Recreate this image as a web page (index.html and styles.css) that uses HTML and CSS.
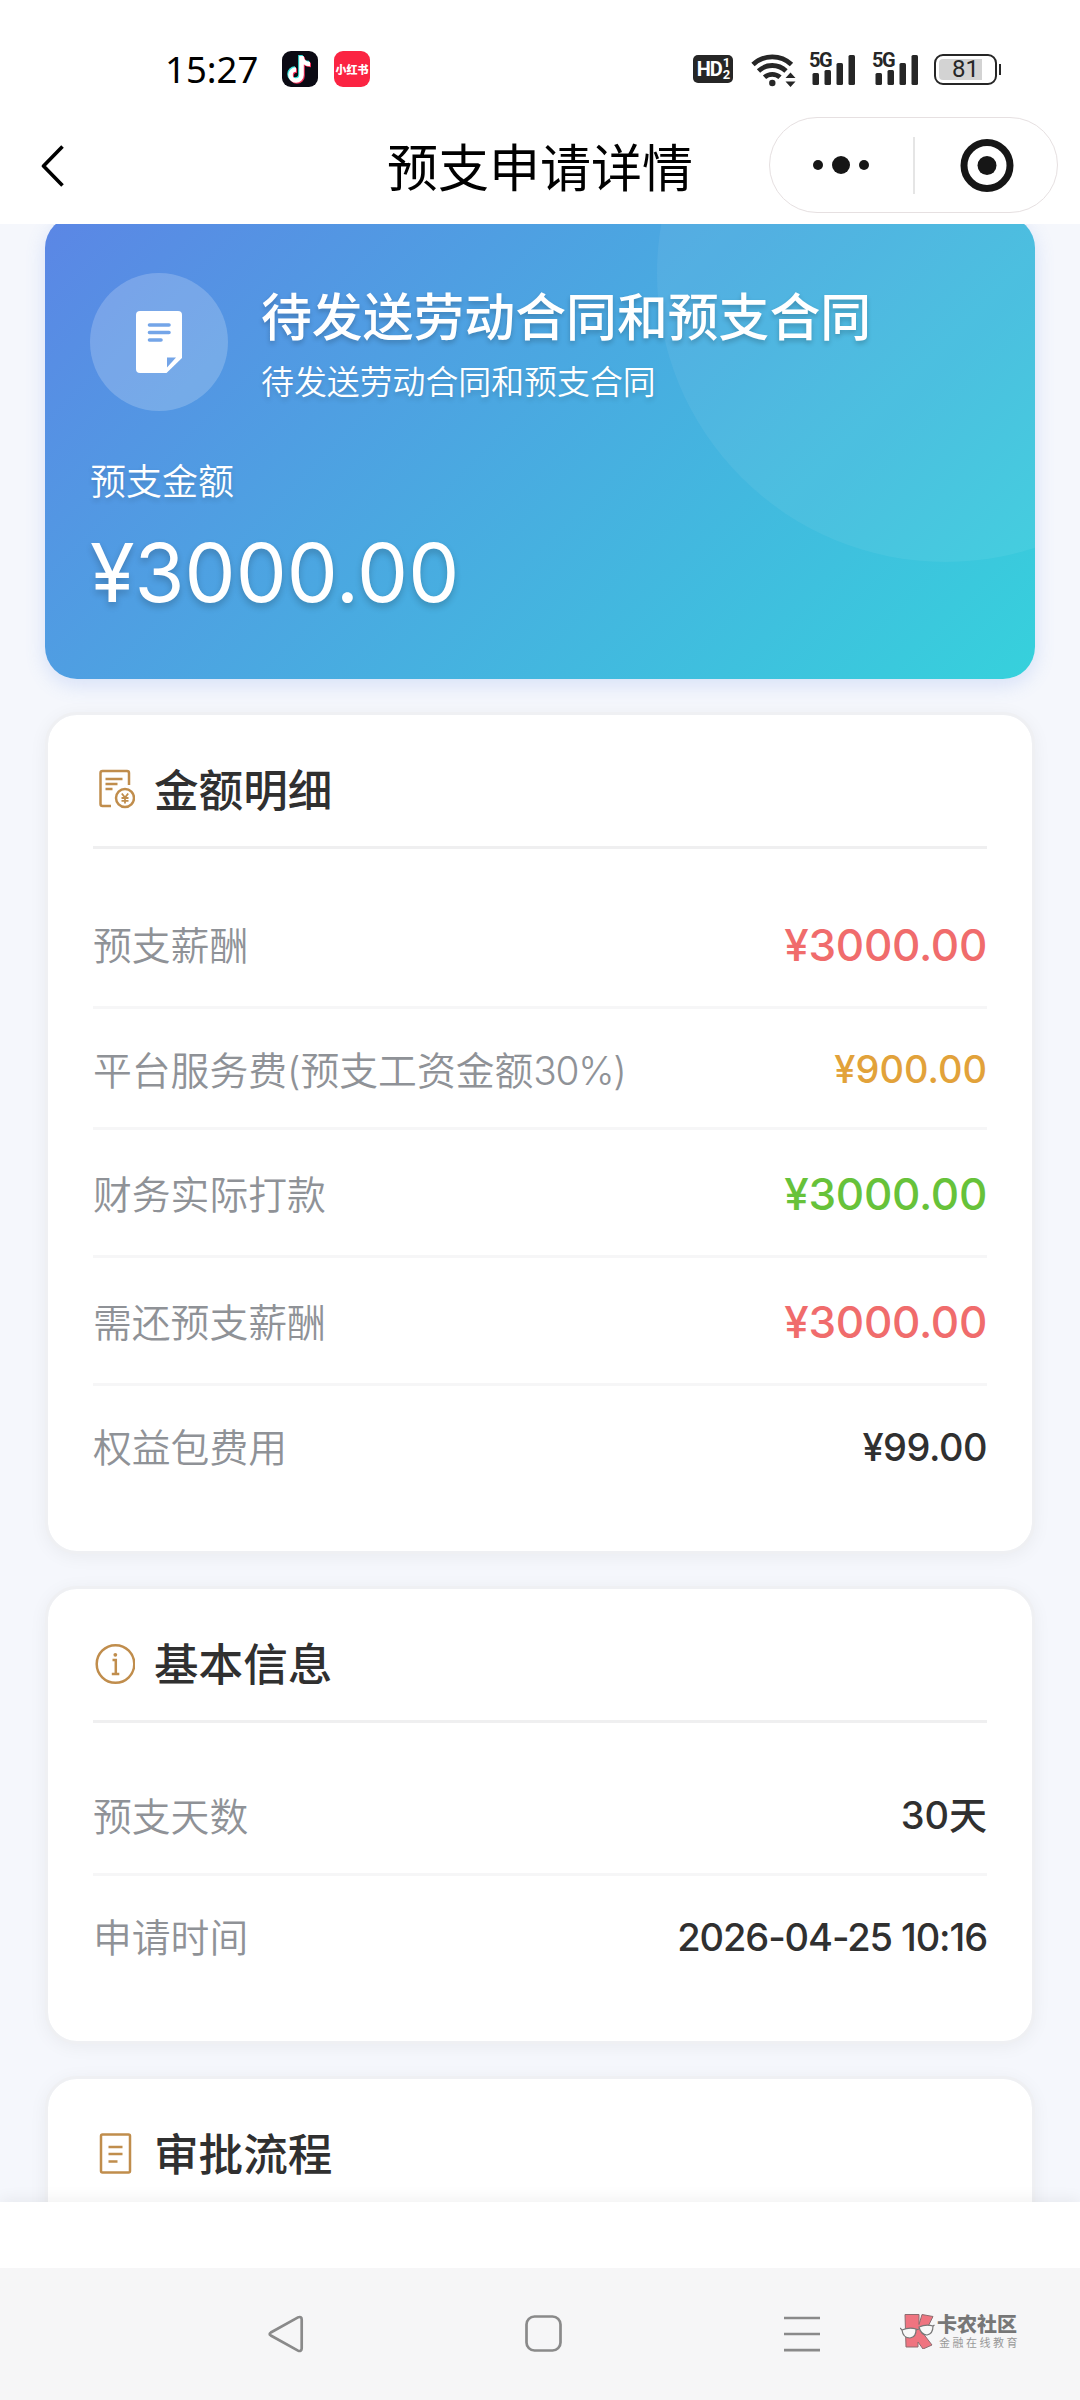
FILE: index.html
```html
<!DOCTYPE html>
<html lang="zh-CN">
<head>
<meta charset="utf-8">
<title>预支申请详情</title>
<link rel="stylesheet" href="styles.css">
</head>
<body>
<div class="phone">
  <header class="top">
    <div class="status">
      <span class="clock">15:27</span>
      <svg class="app" width="36" height="36" viewBox="0 0 36 36"><rect width="36" height="36" rx="9" fill="#0b0a14"/>
        <g fill="none" stroke-width="4.6"><path d="M18.500 4v19a5.500 5.500 0 1 1-5.500-5.500M18.500 5c.5 4 4 7 8.500 7" stroke="#35e6e0"/><path d="M20.500 6v19a5.500 5.500 0 1 1-5.500-5.500M20.500 7c.5 4 4 7 8.500 7" stroke="#f5305a"/><path d="M19.500 5v19a5.500 5.500 0 1 1-5.500-5.500M19.500 6c.5 4 4 7 8.500 7" stroke="#fff"/></g></svg>
      <span class="app red">小红书</span>
      <span class="hd">HD<span class="hd-n"><i>1</i><i>2</i></span></span>
      <svg class="wifi" width="46" height="36" viewBox="0 0 46 36" fill="none" stroke="#262626" stroke-width="4.800"><path d="M2 13.500a28 28 0 0 1 38.500 0M7.500 20a20 20 0 0 1 27.500 0M13.500 26.300a11.500 11.500 0 0 1 15.500 0"/><circle cx="21.300" cy="32" r="3.200" fill="#262626" stroke="none"/><path d="M34.500 27l5-5.500 5 5.500zM34.500 30.500l5 5.500 5-5.500z" fill="#262626" stroke="none"/></svg>
      <span class="sig"><b>5G</b><svg width="46" height="32" viewBox="0 0 46 32" fill="#262626"><rect x="3.500" y="20" width="6.500" height="12" rx="1.500"/><rect x="15.500" y="17" width="6.500" height="15" rx="1.500"/><rect x="27.500" y="10" width="6.500" height="22" rx="1.500"/><rect x="39.500" y="2" width="6.500" height="30" rx="1.500"/></svg></span>
      <span class="sig"><b>5G</b><svg width="46" height="32" viewBox="0 0 46 32" fill="#262626"><rect x="3.500" y="20" width="6.500" height="12" rx="1.500"/><rect x="15.500" y="17" width="6.500" height="15" rx="1.500"/><rect x="27.500" y="10" width="6.500" height="22" rx="1.500"/><rect x="39.500" y="2" width="6.500" height="30" rx="1.500"/></svg></span>
      <span class="battery">81</span><span class="nub"></span>
    </div>
    <div class="nav">
      <svg class="back" width="24" height="42" viewBox="0 0 24 42" fill="none" stroke="#000" stroke-width="3.600"><path d="M21.500 1.500L2.500 21l19 19.500" stroke-linejoin="round"/></svg>
      <h1 class="page-title">预支申请详情</h1>
      <div class="capsule">
        <svg width="286" height="94" viewBox="0 0 286 94"><g fill="#161616"><circle cx="48" cy="47" r="5"/><circle cx="71" cy="47" r="9"/><circle cx="94" cy="47" r="5"/><circle cx="217" cy="47.500" r="9.500"/></g><path d="M144 19v57" stroke="#dcdcdc" stroke-width="1.500"/><circle cx="217" cy="47.500" r="23" fill="none" stroke="#161616" stroke-width="7"/></svg>
      </div>
    </div>
  </header>

  <main class="content">
    <section class="hero">
      <div class="hero-head">
        <div class="hero-icon"><svg width="46" height="62" viewBox="0 0 46 62"><path d="M4 0h38a4 4 0 0 1 4 4v43L30.500 62H4a4 4 0 0 1-4-4V4a4 4 0 0 1 4-4z" fill="#fff"/><path d="M13.500 14h19.500M13.500 21.500h19.500M13.500 29h11.500" stroke="#74a5e8" stroke-width="3.600" stroke-linecap="round"/><path d="M31 46.500h9L31 56.500z" fill="#74a5e8"/></svg></div>
        <div>
          <h2 class="hero-title">待发送劳动合同和预支合同</h2>
          <p class="hero-sub">待发送劳动合同和预支合同</p>
        </div>
      </div>
      <p class="hero-label">预支金额</p>
      <p class="hero-amount">¥3000.00</p>
    </section>

    <section class="card">
      <h3 class="card-head"><svg class="ico" width="42" height="42" viewBox="0 0 42 42" fill="none" stroke="#c08d4c" stroke-width="2.500"><path d="M18 37H9.500a2 2 0 0 1-2-2V4a2 2 0 0 1 2-2H34a2 2 0 0 1 2 2v12M12.500 10h17M12.500 15h12M12.500 20h7"/><circle cx="32" cy="29" r="9"/><path d="M28.800 24.500l3.200 4 3.200-4M32 28.500v6M28.500 29h7M28.500 31.800h7" stroke-width="1.800"/></svg><span class="head-text">金额明细</span></h3>
      <div class="rows">
        <div class="row big"><span class="key">预支薪酬</span><span class="val red-t">¥3000.00</span></div>
        <div class="row"><span class="key">平台服务费(预支工资金额<span class="pct">30%)</span></span><span class="val gold-t">¥900.00</span></div>
        <div class="row big"><span class="key">财务实际打款</span><span class="val green-t">¥3000.00</span></div>
        <div class="row big"><span class="key">需还预支薪酬</span><span class="val red-t">¥3000.00</span></div>
        <div class="row"><span class="key">权益包费用</span><span class="val small">¥99.00</span></div>
      </div>
    </section>

    <section class="card">
      <h3 class="card-head"><svg class="ico" width="42" height="42" viewBox="0 0 42 42" fill="none" stroke="#c08d4c" stroke-width="2.500"><circle cx="22.500" cy="21" r="18.800"/><path d="M19.500 17h3.300v13.500M18.800 31h7.500"/><circle cx="22.300" cy="11.800" r="1.900" fill="#c08d4c" stroke="none"/></svg><span class="head-text">基本信息</span></h3>
      <div class="rows">
        <div class="row"><span class="key">预支天数</span><span class="val days">30天</span></div>
        <div class="row"><span class="key">申请时间</span><span class="val date">2026-04-25 10:16</span></div>
      </div>
    </section>

    <section class="card last">
      <h3 class="card-head"><svg class="ico" width="42" height="42" viewBox="0 0 42 42" fill="none" stroke="#c08d4c" stroke-width="2.500"><rect x="8" y="1.500" width="29" height="38" rx="1.500"/><path d="M15.500 14h14M15.500 21h14M15.500 28.500h9"/></svg><span class="head-text">审批流程</span></h3>
    </section>
  </main>

  <div class="action-bar"></div>
  <footer class="sysnav">
    <svg class="keys" width="552" height="38" viewBox="0 0 552 38" fill="none" stroke="#8a8a8a" stroke-width="2.700"><path d="M2.800 17.500L30 2.400c2-1 3.700 0 3.700 2v29.200c0 2-1.700 3-3.700 2L2.800 20.500c-1.500-1-1.500-2 0-3z"/><rect x="258.500" y="1.500" width="34" height="34" rx="8"/><path d="M516 3h36M516 19h36M516 35.200h36"/></svg>
    <div class="mark">
      <svg width="35" height="36" viewBox="0 0 35 36"><g fill="#ef7480" stroke="#8d6d70" stroke-width="1"><path d="M5 1.500h14v10L22 1.500l11 2-5 10-6 5.500 10 13-9 4-5-7v5H6z"/></g><g fill="#f8f8f8" stroke="#777" stroke-width="1.200"><path d="M2 17q7-3 14-1 .5 8-6 9-7 0-8-8zM19 14q7-3 14-1 0 8-6 9-6 0-8-8z"/><path d="M16 17l3-1M0 15l2 2M33 13l1.500-1"/></g></svg>
      <div><p class="mark-name">卡农社区</p><p class="mark-sub">金融在线教育</p></div>
    </div>
  </footer>
</div>
</body>
</html>
```
FILE: styles.css
```css
* { box-sizing: border-box; margin: 0; padding: 0; }
body { width: 1080px; height: 2400px; overflow: hidden; background: #f5f7fc; color: #303133; font-family: "Inter", "Noto Sans CJK SC", sans-serif; }
svg { display: block; flex: none; }
.phone { width: 1080px; height: 2400px; display: flex; flex-direction: column; }

/* status bar and title bar */
.top { height: 224px; background: #fff; position: relative; z-index: 2; flex: none; }
.status { height: 106px; padding: 32px 79px 0 165px; display: flex; align-items: center; }
.clock { width: 117px; font: 400 36.500px/40px "Noto Sans", sans-serif; color: #000; white-space: nowrap; }
.app { width: 36px; height: 36px; margin-right: 16px; flex: none; }
.red { border-radius: 9px; background: #fb2442; color: #fff; font: 900 11px/36px "Noto Sans CJK SC", sans-serif; text-align: center; white-space: nowrap; }
.hd { margin-left: 307px; width: 40px; height: 28px; border-radius: 5px; background: #262626; color: #fff; font: 700 20px/29px "Roboto", sans-serif; display: flex; justify-content: center; flex: none; letter-spacing: -1px; }
.hd-n { display: flex; flex-direction: column; font-size: 13px; line-height: 12px; padding: 2px 0 0 1px; }
.hd-n i { font-style: normal; }
.wifi { margin-left: 18px; }
.sig { margin-left: 12px; width: 46px; height: 32px; position: relative; flex: none; }
.sig + .sig { margin-left: 17px; }
.sig b { position: absolute; left: 0; top: -2px; font: 700 20px/18px "Roboto", sans-serif; color: #262626; letter-spacing: -1.500px; }
.battery { margin-left: 16px; width: 63px; height: 31px; border: 2.500px solid #262626; border-radius: 9px; background: linear-gradient(90deg, #d3d3d3 43px, #fff 43px) content-box; padding: 3px; font: 400 24px/20px "Roboto", sans-serif; color: #262626; text-align: center; flex: none; }
.nub { width: 2.500px; height: 11px; margin-left: 1.500px; background: #262626; flex: none; }

.nav { height: 118px; display: flex; padding-top: 11px; }
.back { margin: 28px 0 0 41px; }
.page-title { margin-left: 322px; width: 382px; font-size: 51px; font-weight: 400; line-height: 103px; color: #000; }
.capsule { width: 289px; height: 96px; border: 1.500px solid #e6e0e1; border-radius: 48px; flex: none; }

/* summary card */
.content { height: 1978px; flex: none; padding: 0 45px; overflow: hidden; }
.content::before { content: ""; display: table; }
.hero { height: 463px; margin-top: -8px; border-radius: 32px; padding: 57px 45px 0; position: relative; overflow: hidden; background: linear-gradient(135deg, #5b86e5 0%, #36d1dc 100%); box-shadow: 0 6px 20px rgba(91, 134, 229, .2); color: #fff; }
.hero::before { content: ""; position: absolute; left: 612px; top: -231px; width: 577px; height: 577px; border-radius: 50%; background: rgba(255, 255, 255, .06); }
.hero-head { display: flex; gap: 33px; height: 138px; position: relative; }
.hero-icon { width: 138px; height: 138px; border-radius: 50%; background: rgba(255, 255, 255, .2); display: flex; align-items: center; justify-content: center; }
.hero-title { font-size: 50.850px; line-height: 62px; margin-top: 14px; font-weight: 500; white-space: nowrap; text-shadow: 0 3px 5px rgba(0, 0, 0, .2); }
.hero-sub { font-size: 32.900px; line-height: 48px; margin-top: 9px; font-weight: 350; text-shadow: 0 3px 5px rgba(0, 0, 0, .15); }
.hero-label { font-size: 36px; line-height: 50px; margin-top: 46px; font-weight: 350; text-shadow: 0 3px 5px rgba(0, 0, 0, .15); }
.hero-amount { font-size: 81px; line-height: 100px; margin-top: 16px; font-weight: 400; text-shadow: 0 4px 7px rgba(0, 0, 0, .2); }

/* detail cards */
.card { margin-top: 33px; border: 3px solid #eff0f3; background: #fff; background-clip: padding-box; border-radius: 32px; padding: 45px 45px; box-shadow: 0 3px 18px rgba(0, 0, 0, .05); }
.card + .card { margin-top: 32px; }
.card.last { height: 240px; }
.card-head { display: flex; align-items: center; gap: 19px; height: 89px; padding-bottom: 29px; border-bottom: 3px solid #efeff0; font-size: 44.600px; line-height: 57px; font-weight: 500; color: #303030; }
.head-text { padding-top: 5px; }
.ico { margin-top: 2px; }
.rows { padding-top: 32px; margin-bottom: -1px; }
.row { height: 121px; display: flex; align-items: center; justify-content: space-between; border-bottom: 3px solid #f6f6f7; }
.row.big { height: 128px; }
.row:last-child { border-bottom: 0; }
.key { font-size: 38.800px; line-height: 56px; padding-top: 5px; font-weight: 350; color: #8f9297; white-space: nowrap; }
.row:last-child .key { padding-top: 2px; }
.pct { letter-spacing: -1.300px; }
.val { font-size: 38px; line-height: 46px; padding-top: 2px; font-weight: 450; color: #303030; white-space: nowrap; }
.row:last-child .val { padding-top: 0; }
.big .val { font-size: 44px; line-height: 54px; letter-spacing: -.3px; }
.small { letter-spacing: -.5px; }
.date { letter-spacing: -1.100px; }
.val.red-t { color: #f06c6c; }
.val.gold-t { color: #e2a23a; }
.val.green-t { color: #67c23a; }

/* bottom bars */
.action-bar { height: 66px; background: #fff; box-shadow: 0 -3px 15px rgba(0, 0, 0, .06); position: relative; flex: none; }
.sysnav { height: 132px; background: #f6f6f7; display: flex; position: relative; flex: none; }
.keys { margin: 47px 0 0 268px; }
.mark { display: flex; gap: 2px; margin: 45px 0 0 80px; }
.mark-name { font-size: 20px; line-height: 24px; font-weight: 900; color: #777; white-space: nowrap; }
.mark-sub { font-size: 11px; line-height: 13px; letter-spacing: 2.500px; color: #999; white-space: nowrap; margin-left: 2px; }
```
